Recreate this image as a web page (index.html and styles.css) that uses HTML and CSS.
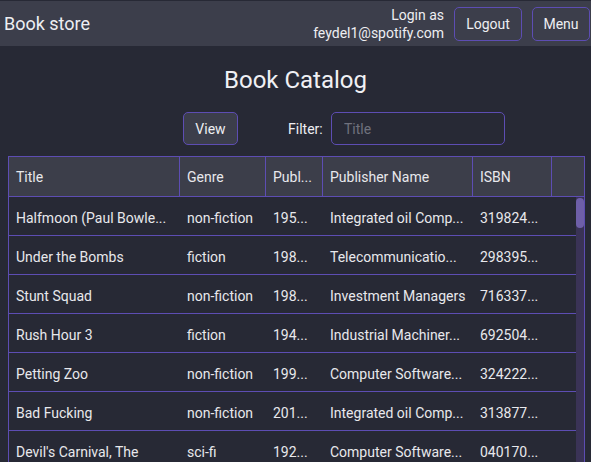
FILE: index.html
```html
<!DOCTYPE html>
<html>
<head>
<meta charset="utf-8">
<link rel="stylesheet" href="styles.css">
</head>
<body>
<header class="topbar">
  <div class="brand">Book store</div>
  <div class="user">
    <div class="login">Login as<br>feydel1@spotify.com</div>
    <button class="btn btn-top btn-logout">Logout</button>
    <button class="btn btn-top btn-menu">Menu</button>
  </div>
</header>
<main class="content">
  <h1 class="title">Book Catalog</h1>
  <div class="toolbar">
    <button class="btn btn-view">View</button>
    <label class="filter-label">Filter:</label>
    <input class="filter-input" type="text" placeholder="Title">
  </div>
  <div class="grid">
    <div class="grid-head">
      <div class="cell c1">Title</div>
      <div class="cell c2">Genre</div>
      <div class="cell c3">Publ...</div>
      <div class="cell c4">Publisher Name</div>
      <div class="cell c5">ISBN</div>
      <div class="cell c6"></div>
    </div>
    <div class="grid-body">
      <div class="rows">
        <div class="row"><div class="cell c1">Halfmoon (Paul Bowle...</div><div class="cell c2">non-fiction</div><div class="cell c3">195...</div><div class="cell c4">Integrated oil Comp...</div><div class="cell c5">319824...</div></div>
        <div class="row"><div class="cell c1">Under the Bombs</div><div class="cell c2">fiction</div><div class="cell c3">198...</div><div class="cell c4">Telecommunicatio...</div><div class="cell c5">298395...</div></div>
        <div class="row"><div class="cell c1">Stunt Squad</div><div class="cell c2">non-fiction</div><div class="cell c3">198...</div><div class="cell c4">Investment Managers</div><div class="cell c5">716337...</div></div>
        <div class="row"><div class="cell c1">Rush Hour 3</div><div class="cell c2">fiction</div><div class="cell c3">194...</div><div class="cell c4">Industrial Machiner...</div><div class="cell c5">692504...</div></div>
        <div class="row"><div class="cell c1">Petting Zoo</div><div class="cell c2">non-fiction</div><div class="cell c3">199...</div><div class="cell c4">Computer Software...</div><div class="cell c5">324222...</div></div>
        <div class="row"><div class="cell c1">Bad Fucking</div><div class="cell c2">non-fiction</div><div class="cell c3">201...</div><div class="cell c4">Integrated oil Comp...</div><div class="cell c5">313877...</div></div>
        <div class="row"><div class="cell c1">Devil's Carnival, The</div><div class="cell c2">sci-fi</div><div class="cell c3">192...</div><div class="cell c4">Computer Software...</div><div class="cell c5">040170...</div></div>
      </div>
      <div class="scrollbar"><div class="thumb"></div></div>
    </div>
  </div>
</main>
</body>
</html>
```
FILE: styles.css
```css
* { box-sizing: border-box; }
html, body { margin: 0; padding: 0; }
body {
  background: #272935;
  color: #e8e8ec;
  font-family: Roboto, "Noto Sans", sans-serif;
  font-size: 14px;
  width: 591px;
  height: 462px;
  overflow: hidden;
}
.topbar {
  margin-top: 1px;
  height: 45px;
  background: #3c3e4b;
  display: flex;
  align-items: center;
  justify-content: space-between;
  padding: 0 1px 0 4px;
}
.brand {
  font-size: 18px;
  color: #eeeef2;
}
.user {
  display: flex;
  align-items: center;
  gap: 10px;
}
.login {
  text-align: right;
  line-height: 18px;
  font-size: 14px;
  color: #eeeef2;
}
.btn {
  font-family: Roboto, "Noto Sans", sans-serif;
  font-size: 14px;
  color: #eeeef2;
  background: #3c3e4b;
  border: 1px solid #5d4db3;
  border-radius: 5px;
  padding: 0;
}
.btn-top { height: 34px; }
.btn-logout { width: 68px; }
.btn-menu { width: 58px; }
.content { display: flex; flex-direction: column; }
.title {
  margin: 20px 0 0 0;
  font-size: 24px;
  line-height: 28px;
  font-weight: 400;
  text-align: center;
  color: #f0f0f4;
}
.toolbar {
  margin: 18px 0 0 183px;
  display: flex;
  align-items: center;
  height: 33px;
}
.btn-view { width: 55px; height: 33px; }
.filter-label { margin-left: 50px; width: 34px; color: #eeeef2; }
.filter-input {
  margin-left: 9px;
  width: 174px;
  height: 33px;
  background: #272935;
  border: 1px solid #5d4db3;
  border-radius: 5px;
  padding: 0 12px;
  font-family: Roboto, "Noto Sans", sans-serif;
  font-size: 14px;
  color: #eeeef2;
  outline: none;
}
.filter-input::placeholder { color: #6f717d; }
.grid {
  margin: 11px 0 0 8px;
  width: 577px;
  border: 1px solid #5d4db3;
  border-bottom: none;
}
.grid-head {
  display: flex;
  height: 40px;
  background: #3c3e4a;
  border-bottom: 1px solid #5d4db3;
}
.grid-head .cell { border-right: 1px solid #5d4db3; }
.grid-head .c6 { border-right: none; }
.cell {
  padding-left: 7px;
  white-space: nowrap;
  overflow: hidden;
  display: flex;
  align-items: center;
}
.c1 { width: 171px; }
.c2 { width: 86px; }
.c3 { width: 57px; }
.c4 { width: 150px; }
.c5 { width: 79px; }
.c6 { width: 32px; }
.grid-body {
  display: flex;
  height: 270px;
}
.rows { width: 567px; }
.row {
  display: flex;
  height: 39px;
  border-bottom: 1px solid #5d4db3;
  color: #e8e8ec;
}
.row .cell { padding-top: 3px; }
.scrollbar {
  width: 8px;
  background: #3a3356;
  padding-top: 1px;
}
.thumb {
  height: 30px;
  background: #6e5fa8;
  border-radius: 4px;
}
```
